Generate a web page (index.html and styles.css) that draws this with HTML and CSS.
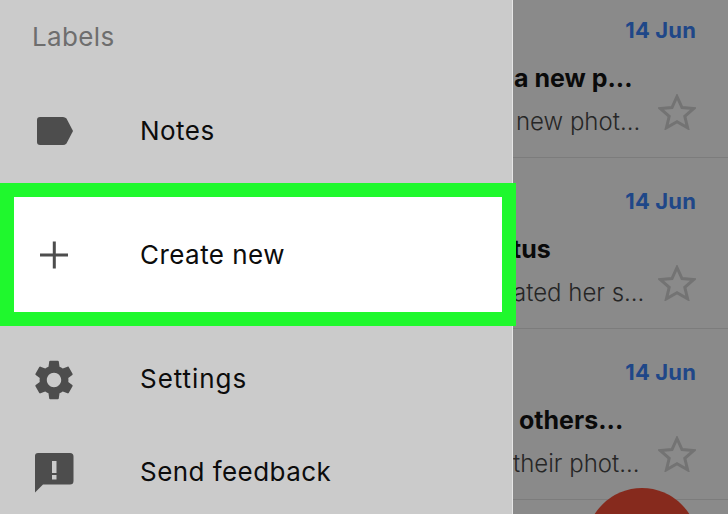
FILE: index.html
```html
<!DOCTYPE html>
<html lang="en">
<head>
<meta charset="utf-8">
<title>Labels</title>
<link rel="stylesheet" href="styles.css">
</head>
<body>
<div class="screen">
  <nav class="drawer">
    <h2 class="drawer-title">Labels</h2>
    <div class="item">
      <span class="icon"><svg width="40" height="28" viewBox="0 0 40 28"><path class="glyph" d="M6 0H29Q31 0 32.500 1.600L39 14 32.500 26.400Q31 28 29 28H6Q3 28 3 25V3Q3 0 6 0Z"/></svg></span>
      <span class="item-label">Notes</span>
    </div>
    <div class="item item-active">
      <span class="icon"><svg width="40" height="28" viewBox="0 0 40 28"><path class="glyph" d="M18.800 0.500H21.800V12.500H34V15.500H21.800V27.500H18.800V15.500H6V12.500H18.800Z"/></svg></span>
      <span class="item-label">Create new</span>
    </div>
    <div class="item item-after">
      <span class="icon"><svg width="40" height="40" viewBox="2 2 20 20"><path class="glyph" d="M19.140 12.940c.04-.3.06-.61.06-.94 0-.32-.02-.64-.07-.94l2.030-1.580c.18-.14.23-.41.12-.61l-1.920-3.320c-.12-.22-.37-.29-.59-.22l-2.390.96c-.5-.38-1.030-.7-1.620-.94l-.36-2.540c-.04-.24-.24-.41-.48-.41h-3.840c-.24 0-.43.17-.47.41l-.36 2.540c-.59.24-1.130.57-1.620.94l-2.390-.96c-.22-.08-.47 0-.59.22L2.740 8.870c-.12.21-.08.47.12.61l2.030 1.580c-.05.3-.09.63-.09.94s.02.64.07.94l-2.030 1.580c-.18.14-.23.41-.12.61l1.920 3.320c.12.22.37.29.59.22l2.390-.96c.5.38 1.030.7 1.620.94l.36 2.540c.05.24.24.41.48.41h3.840c.24 0 .44-.17.47-.41l.36-2.540c.59-.24 1.130-.56 1.620-.94l2.390.96c.22.08.47 0 .59-.22l1.920-3.320c.12-.22.07-.47-.12-.61l-2.010-1.580zM12 15.600c-1.980 0-3.600-1.620-3.600-3.600s1.620-3.600 3.600-3.600 3.600 1.620 3.600 3.600-1.620 3.600-3.600 3.600z"/></svg></span>
      <span class="item-label item-label-wide">Settings</span>
    </div>
    <div class="item">
      <span class="icon"><svg width="40" height="40" viewBox="0 0 40 40"><path class="glyph" fill-rule="evenodd" d="M4 0H36Q39.500 0 39.500 3.500V28Q39.500 31.500 36 31.500H9L1 39.500V3Q1 0 4 0ZM18 8V20H22.500V8ZM18 22V26.500H22.500V22Z"/></svg></span>
      <span class="item-label item-label-raised">Send feedback</span>
    </div>
  </nav>
  <main class="list">
    <article class="mail">
      <div class="mail-date">14 Jun</div>
      <div class="mail-title">a new p...</div>
      <div class="mail-foot">
        <span class="mail-sub">new phot...</span>
        <svg class="star" width="38" height="36" viewBox="0 0 38 36"><path d="M19 2.500L24 13.500 35.800 14.500 26.800 22.300 29.600 33.800 19 27.800 8.400 33.800 11.200 22.300 2.200 14.500 14 13.500Z"/></svg>
      </div>
    </article>
    <article class="mail">
      <div class="mail-date">14 Jun</div>
      <div class="mail-title mail-title-tus">tus</div>
      <div class="mail-foot">
        <span class="mail-sub mail-sub-ated">ated her s...</span>
        <svg class="star" width="38" height="36" viewBox="0 0 38 36"><path d="M19 2.500L24 13.500 35.800 14.500 26.800 22.300 29.600 33.800 19 27.800 8.400 33.800 11.200 22.300 2.200 14.500 14 13.500Z"/></svg>
      </div>
    </article>
    <article class="mail">
      <div class="mail-date">14 Jun</div>
      <div class="mail-title mail-title-others">others...</div>
      <div class="mail-foot">
        <span class="mail-sub mail-sub-their">their phot...</span>
        <svg class="star" width="38" height="36" viewBox="0 0 38 36"><path d="M19 2.500L24 13.500 35.800 14.500 26.800 22.300 29.600 33.800 19 27.800 8.400 33.800 11.200 22.300 2.200 14.500 14 13.500Z"/></svg>
      </div>
    </article>
  </main>
  <div class="fab"></div>
</div>
</body>
</html>
```
FILE: styles.css
```css
* { box-sizing: border-box; }
html, body { margin: 0; padding: 0; }
body { width: 728px; height: 514px; overflow: hidden; font-family: Inter, "Liberation Sans", sans-serif; }
.screen { position: relative; display: flex; width: 728px; height: 514px; overflow: hidden; background: #8a8a8a; }
.drawer { position: relative; z-index: 2; flex: 0 0 513px; width: 513px; min-width: 0; height: 514px; background: #cbcbcb; border-right: 1px solid #e6e6e6; }
.drawer-title { margin: 0; height: 84px; padding: 21px 0 0 32px; font-size: 26px; line-height: 32px; font-weight: 400; letter-spacing: 0.35px; color: #6e6e6e; }
.item { display: flex; align-items: center; height: 93px; padding-left: 34px; font-size: 26px; letter-spacing: 0.45px; color: #0c0c0c; }
.icon { display: flex; align-items: center; justify-content: center; flex: 0 0 40px; margin-right: 66px; }
.glyph { fill: #4d4d4d; }
.item-label { white-space: nowrap; }
.item-label-wide { margin-bottom: 2px; letter-spacing: 0.95px; }
.item-label-raised { margin-bottom: 2px; }
.item-active { height: 143px; width: 516px; margin-top: 6px; padding-left: 20px; background: #fff; border: 14px solid #1ff82d; }
.item-after { margin-top: 7px; }
.list { flex: 1; min-width: 0; margin-top: -13px; }
.mail { height: 171px; padding: 30px 32px 0 3px; border-bottom: 1px solid #7c7c7c; }
.mail-date { text-align: right; font-size: 22px; line-height: 26px; font-weight: 700; letter-spacing: 0.15px; color: #1f4788; }
.mail-title { margin: 20px 0 0 -2px; font-size: 25px; line-height: 30px; font-weight: 700; color: #0a0a0a; white-space: nowrap; }
.mail-title-tus { margin-left: -4px; }
.mail-title-others { margin-left: 3px; }
.mail-foot { display: flex; justify-content: space-between; align-items: flex-start; margin-top: 1px; }
.mail-sub { margin-top: 12px; font-size: 24px; line-height: 32px; font-weight: 300; color: #262626; white-space: nowrap; }
.mail-sub-ated { margin-left: -3px; }
.mail-sub-their { margin-left: -3px; }
.star { fill: none; stroke: #737373; stroke-width: 3; }
.fab { position: absolute; z-index: 1; left: 586px; top: 488px; width: 112px; height: 112px; border-radius: 50%; background: #862a1d; }
```
